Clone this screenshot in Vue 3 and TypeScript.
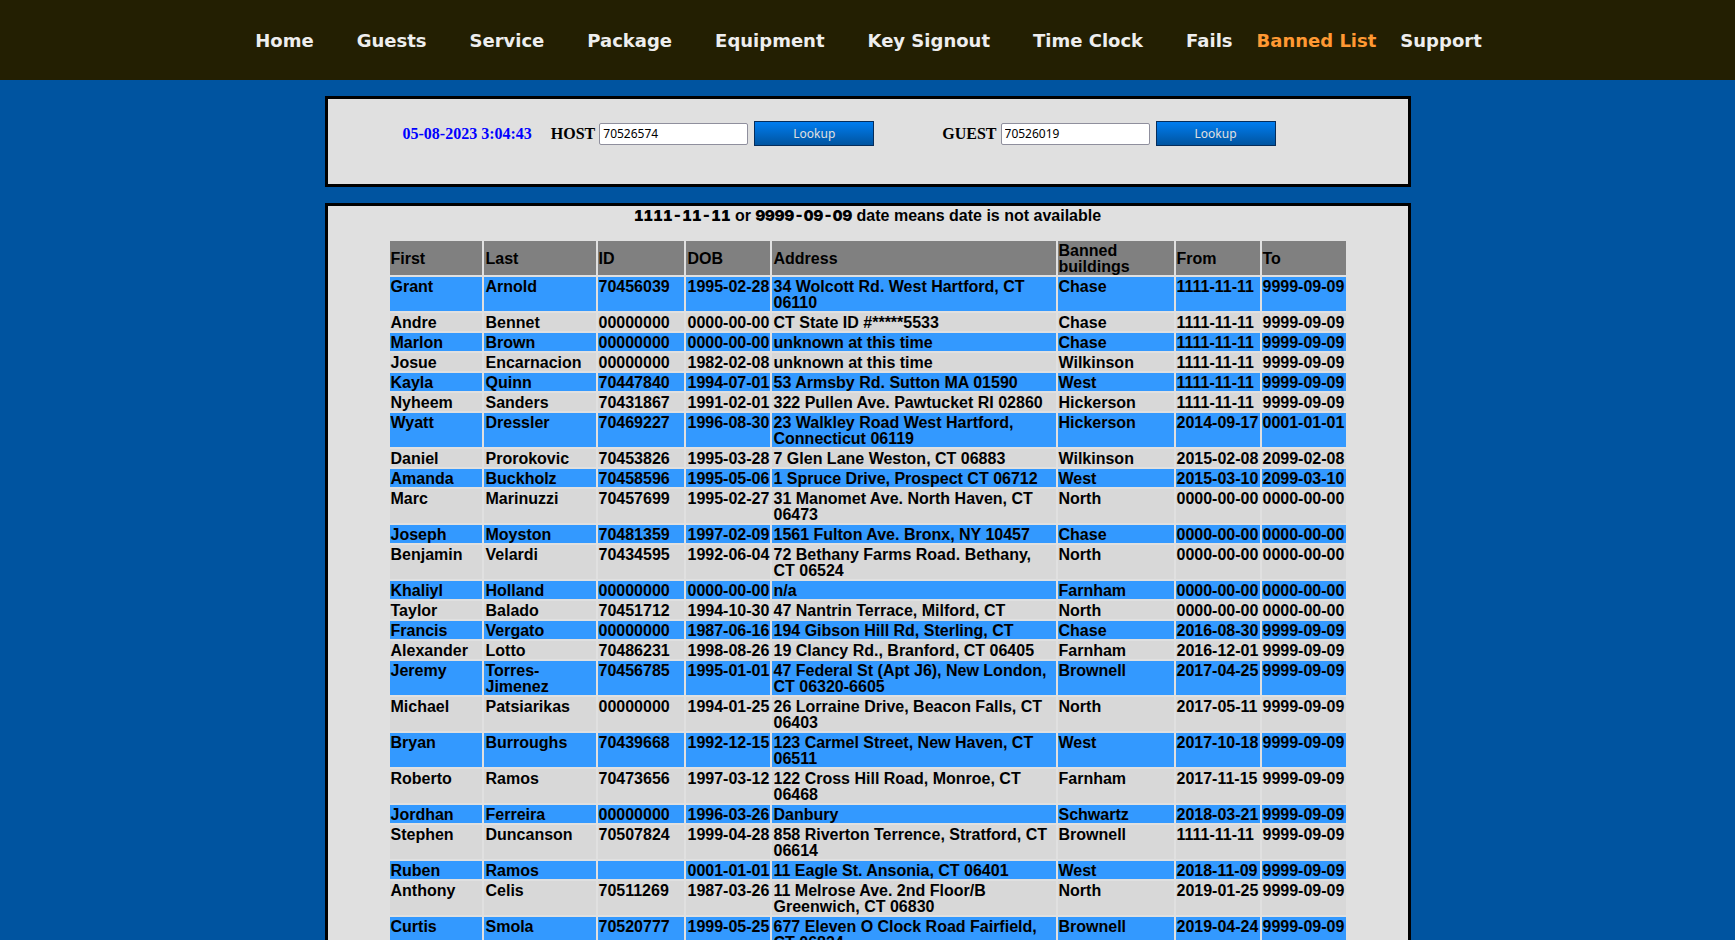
<script setup lang="ts">
import { ref } from 'vue'

interface NavItem { label: string; active?: boolean; tight?: boolean }

const nav: NavItem[] = [
  { label: 'Home' },
  { label: 'Guests' },
  { label: 'Service' },
  { label: 'Package' },
  { label: 'Equipment' },
  { label: 'Key Signout' },
  { label: 'Time Clock' },
  { label: 'Fails', tight: true },
  { label: 'Banned List', active: true, tight: true },
  { label: 'Support', tight: true },
]

const host = ref('70526574')
const guest = ref('70526019')

const columns = ['First', 'Last', 'ID', 'DOB', 'Address', 'Banned buildings', 'From', 'To']

const rows: string[][] = [
  ['Grant', 'Arnold', '70456039', '1995-02-28', '34 Wolcott Rd. West Hartford, CT 06110', 'Chase', '1111-11-11', '9999-09-09'],
  ['Andre', 'Bennet', '00000000', '0000-00-00', 'CT State ID #*****5533', 'Chase', '1111-11-11', '9999-09-09'],
  ['Marlon', 'Brown', '00000000', '0000-00-00', 'unknown at this time', 'Chase', '1111-11-11', '9999-09-09'],
  ['Josue', 'Encarnacion', '00000000', '1982-02-08', 'unknown at this time', 'Wilkinson', '1111-11-11', '9999-09-09'],
  ['Kayla', 'Quinn', '70447840', '1994-07-01', '53 Armsby Rd. Sutton MA 01590', 'West', '1111-11-11', '9999-09-09'],
  ['Nyheem', 'Sanders', '70431867', '1991-02-01', '322 Pullen Ave. Pawtucket RI 02860', 'Hickerson', '1111-11-11', '9999-09-09'],
  ['Wyatt', 'Dressler', '70469227', '1996-08-30', '23 Walkley Road West Hartford, Connecticut 06119', 'Hickerson', '2014-09-17', '0001-01-01'],
  ['Daniel', 'Prorokovic', '70453826', '1995-03-28', '7 Glen Lane Weston, CT 06883', 'Wilkinson', '2015-02-08', '2099-02-08'],
  ['Amanda', 'Buckholz', '70458596', '1995-05-06', '1 Spruce Drive, Prospect CT 06712', 'West', '2015-03-10', '2099-03-10'],
  ['Marc', 'Marinuzzi', '70457699', '1995-02-27', '31 Manomet Ave. North Haven, CT 06473', 'North', '0000-00-00', '0000-00-00'],
  ['Joseph', 'Moyston', '70481359', '1997-02-09', '1561 Fulton Ave. Bronx, NY 10457', 'Chase', '0000-00-00', '0000-00-00'],
  ['Benjamin', 'Velardi', '70434595', '1992-06-04', '72 Bethany Farms Road. Bethany, CT 06524', 'North', '0000-00-00', '0000-00-00'],
  ['Khaliyl', 'Holland', '00000000', '0000-00-00', 'n/a', 'Farnham', '0000-00-00', '0000-00-00'],
  ['Taylor', 'Balado', '70451712', '1994-10-30', '47 Nantrin Terrace, Milford, CT', 'North', '0000-00-00', '0000-00-00'],
  ['Francis', 'Vergato', '00000000', '1987-06-16', '194 Gibson Hill Rd, Sterling, CT', 'Chase', '2016-08-30', '9999-09-09'],
  ['Alexander', 'Lotto', '70486231', '1998-08-26', '19 Clancy Rd., Branford, CT 06405', 'Farnham', '2016-12-01', '9999-09-09'],
  ['Jeremy', 'Torres-Jimenez', '70456785', '1995-01-01', '47 Federal St (Apt J6), New London, CT 06320-6605', 'Brownell', '2017-04-25', '9999-09-09'],
  ['Michael', 'Patsiarikas', '00000000', '1994-01-25', '26 Lorraine Drive, Beacon Falls, CT 06403', 'North', '2017-05-11', '9999-09-09'],
  ['Bryan', 'Burroughs', '70439668', '1992-12-15', '123 Carmel Street, New Haven, CT 06511', 'West', '2017-10-18', '9999-09-09'],
  ['Roberto', 'Ramos', '70473656', '1997-03-12', '122 Cross Hill Road, Monroe, CT 06468', 'Farnham', '2017-11-15', '9999-09-09'],
  ['Jordhan', 'Ferreira', '00000000', '1996-03-26', 'Danbury', 'Schwartz', '2018-03-21', '9999-09-09'],
  ['Stephen', 'Duncanson', '70507824', '1999-04-28', '858 Riverton Terrence, Stratford, CT 06614', 'Brownell', '1111-11-11', '9999-09-09'],
  ['Ruben', 'Ramos', '', '0001-01-01', '11 Eagle St. Ansonia, CT 06401', 'West', '2018-11-09', '9999-09-09'],
  ['Anthony', 'Celis', '70511269', '1987-03-26', '11 Melrose Ave. 2nd Floor/B Greenwich, CT 06830', 'North', '2019-01-25', '9999-09-09'],
  ['Curtis', 'Smola', '70520777', '1999-05-25', '677 Eleven O Clock Road Fairfield, CT 06824', 'Brownell', '2019-04-24', '9999-09-09'],
]
</script>

<template>
  <div class="page">
    <nav class="nav">
      <a v-for="n in nav" :key="n.label" href="#" :class="{ active: n.active, tight: n.tight }">{{ n.label }}</a>
    </nav>

    <main>
      <section class="panel lookup">
        <time>05-08-2023 3:04:43</time>
        <form class="host" @submit.prevent>
          <label for="host">HOST</label>
          <input id="host" v-model="host" type="text" />
          <button type="submit">Lookup</button>
        </form>
        <form @submit.prevent>
          <label for="guest">GUEST</label>
          <input id="guest" v-model="guest" type="text" />
          <button type="submit">Lookup</button>
        </form>
      </section>

      <section class="panel list">
        <p class="note"><strong>1111-11-11</strong> or <strong>9999-09-09</strong> date means date is not available</p>
        <table>
          <colgroup>
            <col v-for="(c, i) in columns" :key="c" :class="'c' + i" />
          </colgroup>
          <thead>
            <tr><th v-for="c in columns" :key="c" scope="col">{{ c }}</th></tr>
          </thead>
          <tbody>
            <tr v-for="(r, i) in rows" :key="i">
              <td v-for="(v, j) in r" :key="j">{{ v }}</td>
            </tr>
          </tbody>
        </table>
      </section>
    </main>
  </div>
</template>

<style>
html { background: #0054a0; }
body { margin: 0; }
</style>

<style scoped>
.page {
  min-height: 100vh;
  background: #0054a0;
}
.nav {
  box-sizing: border-box;
  display: flex;
  justify-content: center;
  align-items: center;
  height: 80px;
  padding: 2px 0 0 2px;
  background: #231f02;
  font: bold 18px/22px Verdana, "DejaVu Sans", sans-serif;
}
.nav a {
  color: #eee;
  text-decoration: none;
  white-space: nowrap;
  margin-right: 43px;
}
.nav a.tight { margin-right: 24px; }
.nav a:last-child { margin-right: 0; }
.nav a.active { color: #ff9933; }
main {
  display: flex;
  flex-direction: column;
  align-items: center;
  gap: 16px;
  padding-top: 16px;
}
.panel {
  box-sizing: border-box;
  width: 100%;
  max-width: 1086px;
  border: 3px solid #000;
  background: #e0e0e0;
}
.lookup {
  display: flex;
  padding: 22px 75px 38px;
  font: bold 16px/25px "Times New Roman", "Liberation Serif", serif;
}
.lookup time {
  color: #0000ff;
  margin-right: 19px;
}
.lookup form {
  display: flex;
  align-items: center;
}
.lookup .host { margin-right: 68px; }
.lookup input {
  box-sizing: border-box;
  width: 149px;
  height: 22px;
  margin: 0 6px 0 4px;
  padding: 1px 3px;
  border: 1px solid #8f8f9d;
  border-radius: 2px;
  background: #fff;
  color: #000;
  font: 12px/18px "Noto Sans", sans-serif;
}
.lookup button {
  box-sizing: border-box;
  width: 120px;
  height: 25px;
  padding: 0;
  border: 1px solid #052d5b;
  background: linear-gradient(#007df0, #0054a0);
  color: #e0e0e0;
  font: 12px/22px "Noto Sans", sans-serif;
}
.list {
  font: bold 16px/16px Arial, "Liberation Sans", sans-serif;
  color: #000;
}
.note {
  margin: 0;
  padding: 1px 0 14px;
  text-align: center;
  line-height: 18px;
}
.note strong {
  font: 900 15px/16px Inter, sans-serif;
  font-variant-numeric: tabular-nums;
}
table {
  table-layout: fixed;
  width: 960px;
  margin: 0 auto;
  border-collapse: separate;
  border-spacing: 2px;
}
th, td {
  padding: 2px 1px 0;
  text-align: left;
}
th:nth-child(2), td:nth-child(2),
th:nth-child(4), td:nth-child(4),
th:nth-child(5), td:nth-child(5) {
  padding: 2px 0 0 2px;
}
th {
  background: #808080;
  vertical-align: middle;
}
td {
  background: #d8d8d8;
  vertical-align: top;
}
tbody tr:nth-child(odd) td { background: #3399ff; }
.c0 { width: 92px; }
.c1 { width: 112px; }
.c2 { width: 86px; }
.c3 { width: 84px; }
.c4 { width: 284px; }
.c5 { width: 116px; }
.c6 { width: 84px; }
.c7 { width: 84px; }
</style>
